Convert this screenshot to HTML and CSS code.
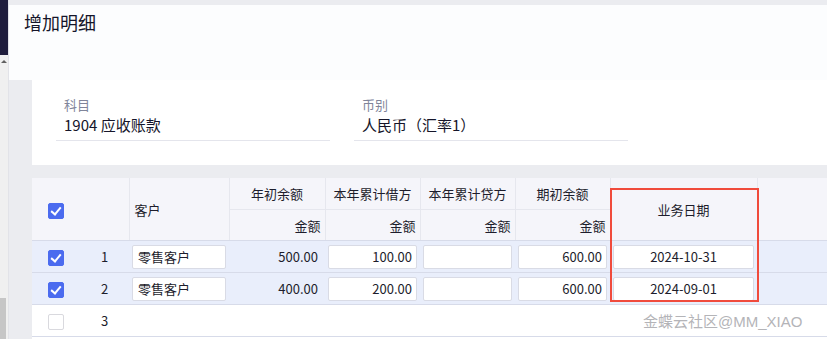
FILE: index.html
```html
<!DOCTYPE html>
<html lang="zh">
<head>
  <meta charset="UTF-8" />
  <title>增加明细</title>
  <link rel="stylesheet" href="styles.css">
</head>
<body>
  <div class="side">
    <div class="side-top"></div>
    <div class="side-arrow"></div>
    <div class="side-fill"></div>
    <div class="side-thumb"></div>
  </div>

  <div class="main">
    <div class="title-bar">
      <h1>增加明细</h1>
    </div>

    <div class="content">
      <div class="card">
        <div class="field">
          <div class="field-label">科目</div>
          <div class="field-value">1904 应收账款</div>
        </div>
        <div class="field">
          <div class="field-label">币别</div>
          <div class="field-value">人民币（汇率1）</div>
        </div>
      </div>

      <div class="grid-wrap">
        <table class="grid">
          <colgroup>
            <col class="c-check">
            <col class="c-no">
            <col class="c-cust">
            <col class="c-amt">
            <col class="c-amt2">
            <col class="c-amt2">
            <col class="c-amt2">
            <col class="c-date">
            <col>
          </colgroup>
          <thead>
            <tr class="h1">
              <th rowspan="2" class="center no-line"><span class="cb on"></span></th>
              <th rowspan="2"></th>
              <th rowspan="2" class="left">客户</th>
              <th class="center">年初余额</th>
              <th class="center">本年累计借方</th>
              <th class="center">本年累计贷方</th>
              <th class="center">期初余额</th>
              <th rowspan="2" class="center">业务日期</th>
              <th rowspan="2" class="no-line"></th>
            </tr>
            <tr class="h2">
              <th class="right">金额</th>
              <th class="right">金额</th>
              <th class="right">金额</th>
              <th class="right">金额</th>
            </tr>
          </thead>
          <tbody>
            <tr class="sel">
              <td class="center"><span class="cb on"></span></td>
              <td class="center">1</td>
              <td><div class="inp">零售客户</div></td>
              <td class="right num">500.00</td>
              <td><div class="inp r">100.00</div></td>
              <td><div class="inp r"></div></td>
              <td><div class="inp r">600.00</div></td>
              <td><div class="inp c">2024-10-31</div></td>
              <td></td>
            </tr>
            <tr class="sel">
              <td class="center"><span class="cb on"></span></td>
              <td class="center">2</td>
              <td><div class="inp">零售客户</div></td>
              <td class="right num">400.00</td>
              <td><div class="inp r">200.00</div></td>
              <td><div class="inp r"></div></td>
              <td><div class="inp r">600.00</div></td>
              <td><div class="inp c">2024-09-01</div></td>
              <td></td>
            </tr>
            <tr>
              <td class="center"><span class="cb"></span></td>
              <td class="center">3</td>
              <td></td>
              <td></td>
              <td></td>
              <td></td>
              <td></td>
              <td></td>
              <td></td>
            </tr>
          </tbody>
        </table>

        <div class="mark"></div>
        <div class="watermark">金蝶云社区@MM_XIAO</div>
      </div>
    </div>
  </div>
</body>
</html>
```

FILE: styles.css
```css
body {
  margin: 0;
  display: flex;
  height: 339px;
  overflow: hidden;
  background-color: #ebecf0;
  font-family: "Microsoft YaHei", "Noto Sans CJK SC", "Noto Sans", sans-serif;
  color: #1d1d2c;
}

/* left strip (scrollbar of the page behind) */
.side {
  width: 8px;
  flex: none;
  display: flex;
  flex-direction: column;
  background-color: #f0f0f0;
}

.side-top {
  height: 55px;
  background-color: #1f1d3d;
}

.side-arrow {
  width: 0;
  height: 0;
  margin: 5px 0 0 1px;
  border-left: 3px solid transparent;
  border-right: 3px solid transparent;
  border-bottom: 3px solid #606060;
}

.side-fill {
  flex: 1;
}

.side-thumb {
  height: 41px;
  width: 6px;
  background-color: #c6c6c6;
}

.main {
  flex: 1;
  display: flex;
  flex-direction: column;
  padding-top: 5px;
  border-left: 1px solid #e2e3e8;
}

.title-bar {
  height: 75px;
  background-color: #fcfdfe;
  padding-left: 15px;
}

.title-bar h1 {
  margin: 0;
  padding-top: 5px;
  font-size: 18px;
  font-weight: normal;
  line-height: 24px;
  color: #15152a;
}

.content {
  padding-left: 23px;
}

.card {
  display: flex;
  gap: 24px;
  height: 85px;
  box-sizing: border-box;
  background-color: white;
  padding: 16px 0 0 24px;
}

.field {
  width: 274px;
  border-bottom: 1px solid #e4e5ec;
  height: 44px;
}

.field-label {
  padding-left: 8px;
  font-size: 13px;
  line-height: 18px;
  color: #80859a;
}

.field-value {
  padding-left: 8px;
  font-size: 15px;
  line-height: 22px;
  color: #15152a;
}

.grid-wrap {
  position: relative;
  margin-top: 13px;
  background-color: white;
  height: 161px;
}

.grid {
  width: 100%;
  table-layout: fixed;
  border-collapse: collapse;
  font-size: 13px;
}

.c-check { width: 48px; }
.c-no { width: 49px; }
.c-cust { width: 100px; }
.c-amt { width: 96px; }
.c-amt2 { width: 95px; }
.c-date { width: 147px; }

.grid th {
  background-color: #f5f5fa;
  font-weight: normal;
  color: #1d1d2c;
  padding: 0 4px;
  border-right: 1px solid #e6e7ee;
  border-bottom: 1px solid #e6e7ee;
}

.grid th.no-line {
  border-right: none;
}

.grid thead tr.h2 th,
.grid thead th[rowspan] {
  border-bottom: 1px solid #d7dbe9;
}

.grid tr.h1 th {
  height: 31px;
}

.grid tr.h2 th {
  height: 30px;
}

.grid td {
  height: 31px;
  padding: 0 3px;
  border-bottom: 1px solid #d7dbe9;
}

.grid tr.sel td {
  background-color: #e9eefb;
}

.center { text-align: center; }
.left { text-align: left; }
.right { text-align: right; }

.grid th.left {
  padding-left: 5px;
}

.grid td.num {
  padding-right: 7px;
}

.cb {
  display: inline-block;
  width: 16px;
  height: 16px;
  box-sizing: border-box;
  border: 1px solid #d9d9de;
  border-radius: 2px;
  background-color: white;
  vertical-align: middle;
  position: relative;
}

.cb.on {
  background-color: #4b6bef;
  border-color: #4b6bef;
}

.cb.on::after {
  content: "";
  position: absolute;
  left: 4px;
  top: 1px;
  width: 4px;
  height: 8px;
  border-right: 2px solid white;
  border-bottom: 2px solid white;
  transform: rotate(40deg);
}

.inp {
  height: 24px;
  box-sizing: border-box;
  border: 1px solid #d9dbe5;
  border-radius: 2px;
  background-color: white;
  line-height: 22px;
  padding: 0 5px;
  font-size: 13px;
  color: #1d1d2c;
}

.inp.r { text-align: right; padding-right: 4px; }
.inp.c { text-align: center; }

/* red annotation box */
.mark {
  position: absolute;
  left: 578px;
  top: 10px;
  width: 149px;
  height: 114px;
  box-sizing: border-box;
  border: 2px solid #f04b3c;
}

.watermark {
  position: absolute;
  left: 611px;
  top: 132px;
  font-size: 15px;
  color: #b4b4b8;
  font-family: "Liberation Sans", "Noto Sans CJK SC", sans-serif;
}
```
